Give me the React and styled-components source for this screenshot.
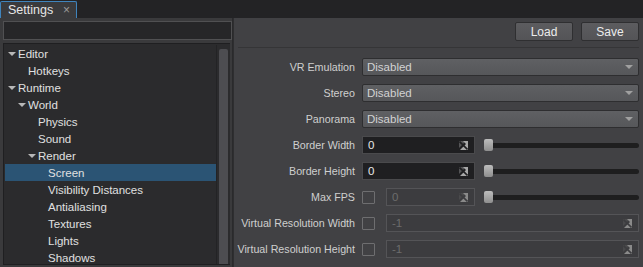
import React from 'react'
import styled, { createGlobalStyle } from 'styled-components'

const Global = createGlobalStyle`
  html, body {
    margin: 0;
    padding: 0;
    background: #232325;
  }
  body {
    font-family: 'Liberation Sans', Arial, sans-serif;
    font-size: 11px;
    color: #dcdcdc;
  }
`

const Window = styled.div`
  width: 643px;
  height: 267px;
  display: flex;
  flex-direction: column;
  overflow: hidden;
  background: #3a3a3c;
`

const TabBar = styled.div`
  height: 18px;
  display: flex;
  align-items: flex-end;
  background: #232325;
`

const Tab = styled.div`
  width: 77px;
  height: 17px;
  box-sizing: border-box;
  display: flex;
  align-items: center;
  justify-content: space-between;
  padding: 0 6px 0 7px;
  background: #3a3a3c;
  border: 1px solid #3f84bd;
  border-bottom: none;
  border-radius: 2px 2px 0 0;
  font-size: 12.5px;
  color: #e6e6e6;
`

const Close = styled.span`
  font-size: 12px;
  color: #9a9a9a;
`

const Body = styled.div`
  flex: 1;
  display: flex;
  min-height: 0;
`

const LeftPane = styled.div`
  width: 233px;
  padding: 3px 0 2px 3px;
  box-sizing: border-box;
  display: flex;
  flex-direction: column;
  gap: 3px;
  border-right: 1px solid #2a2a2c;
`

const Search = styled.div`
  height: 19px;
  box-sizing: border-box;
  background: #262628;
  border: 1px solid #505052;
`

const TreeBox = styled.div`
  flex: 1;
  display: flex;
  background: #2b2b2d;
  border: 1px solid #1f1f21;
  border-right: none;
  padding-top: 1px;
  margin-right: 2px;
  min-height: 0;
  overflow: hidden;
`

const TreeList = styled.div`
  flex: 1;
  padding: 0 0 0 1px;
`

const Node = styled.div`
  height: 17px;
  display: flex;
  align-items: center;
  padding-left: ${p => 3 + p.level * 10}px;
  background: ${p => (p.selected ? '#2b5474' : 'transparent')};
  color: #e0e0e0;
  font-size: 11.5px;
  white-space: nowrap;
`

const Arrow = styled.span`
  width: 10px;
  display: inline-flex;
  justify-content: flex-start;
  &::before {
    content: '';
    display: ${p => (p.open ? 'block' : 'none')};
    border-left: 4px solid transparent;
    border-right: 4px solid transparent;
    border-top: 4px solid #b8b8b8;
    margin-top: 1px;
  }
`

const Scroll = styled.div`
  width: 13px;
  background: #2b2b2d;
  border-left: 1px solid #232325;
  display: flex;
  justify-content: center;
  padding-top: 4px;
`

const Thumb = styled.div`
  width: 9px;
  height: 100%;
  background: #4d4d51;
  border-radius: 2px 2px 0 0;
`

const RightPane = styled.div`
  flex: 1;
  background: #414144;
  border-left: 1px solid #2e2e30;
  display: flex;
  flex-direction: column;
  padding: 4px 4px 0 4px;
`

const Toolbar = styled.div`
  display: flex;
  justify-content: flex-end;
  gap: 8px;
  padding-bottom: 6px;
  border-bottom: 1px solid #353537;
`

const Button = styled.div`
  width: 58px;
  height: 19px;
  box-sizing: border-box;
  display: flex;
  align-items: center;
  justify-content: center;
  background: linear-gradient(#5c5c5f, #545457);
  border: 1px solid #2f2f31;
  border-radius: 2px;
  color: #ececec;
  font-size: 12px;
`

const Form = styled.div`
  display: grid;
  grid-template-columns: 117px 1fr;
  column-gap: 7px;
  row-gap: 8px;
  padding-top: 10px;
`

const Label = styled.div`
  height: 18px;
  display: flex;
  align-items: center;
  justify-content: flex-end;
  color: #cfcfcf;
  white-space: nowrap;
  font-size: 10.7px;
`

const Controls = styled.div`
  flex: 1;
  display: flex;
  align-items: center;
  gap: ${p => p.gap || 9}px;
`

const Select = styled.div`
  flex: 1;
  height: 18px;
  box-sizing: border-box;
  display: flex;
  align-items: center;
  justify-content: space-between;
  padding: 0 5px 0 4px;
  background: linear-gradient(#5f6063, #56575a);
  border: 1px solid #2e2e30;
  border-radius: 2px;
  color: #d2d2d2;
  font-size: 11.5px;
  &::after {
    content: '';
    border-left: 4px solid transparent;
    border-right: 4px solid transparent;
    border-top: 4px solid #a0a0a0;
  }
`

const NumInput = styled.div`
  width: ${p => (p.wide ? 'auto' : `${p.w || 113}px`)};
  flex: ${p => (p.wide ? 1 : 'none')};
  height: 18px;
  box-sizing: border-box;
  display: flex;
  align-items: center;
  justify-content: space-between;
  padding: 0 6px 0 5px;
  background: ${p => (p.disabled ? '#3c3c3f' : '#1f1f21')};
  border: 1px solid ${p => (p.disabled ? '#545457' : '#4a4a4c')};
  color: ${p => (p.disabled ? '#6c6c6c' : '#e8e8e8')};
  font-size: 11.5px;
`

const Check = styled.div`
  width: 13px;
  height: 13px;
  box-sizing: border-box;
  border: 1px solid #6e6e70;
  border-radius: 1px;
  flex: none;
`

const Slider = styled.div`
  flex: 1;
  height: 12px;
  display: flex;
  align-items: center;
  position: relative;
`

const Groove = styled.div`
  flex: 1;
  height: 5px;
  margin-left: 2px;
  background: #1e1e1f;
  border-radius: 3px;
`

const Handle = styled.div`
  position: absolute;
  left: 0;
  top: 0;
  width: 9px;
  height: 12px;
  background: linear-gradient(#bdbdbd, #8e8e8e);
  border-radius: 2px;
`

const Spin = ({ dim }) => (
  <svg width="9" height="9" viewBox="0 0 9 9">
    <polygon points="0,0 7,0 0,7" fill={dim ? '#4a4a4c' : '#555557'} />
    <polygon points="9,1 9,9 1,9" fill={dim ? '#8a8a8a' : '#a8a8a8'} />
    <polygon points="4,0 9,0 9,5" fill={dim ? '#8a8a8a' : '#a8a8a8'} />
    <line x1="0.5" y1="0.5" x2="8.5" y2="8.5" stroke={dim ? '#3c3c3f' : '#1f1f21'} strokeWidth="1.6" />
  </svg>
)

const tree = [
  { label: 'Editor', level: 0, open: true },
  { label: 'Hotkeys', level: 1 },
  { label: 'Runtime', level: 0, open: true },
  { label: 'World', level: 1, open: true },
  { label: 'Physics', level: 2 },
  { label: 'Sound', level: 2 },
  { label: 'Render', level: 2, open: true },
  { label: 'Screen', level: 3, selected: true },
  { label: 'Visibility Distances', level: 3 },
  { label: 'Antialiasing', level: 3 },
  { label: 'Textures', level: 3 },
  { label: 'Lights', level: 3 },
  { label: 'Shadows', level: 3 },
]

const SliderCtl = () => (
  <Slider>
    <Groove />
    <Handle />
  </Slider>
)

export default function App() {
  return (
    <>
      <Global />
      <Window>
        <TabBar>
          <Tab>
            <span>Settings</span>
            <Close>×</Close>
          </Tab>
        </TabBar>
        <Body>
          <LeftPane>
            <Search />
            <TreeBox>
              <TreeList>
                {tree.map(n => (
                  <Node key={n.label} level={n.level} selected={n.selected}>
                    <Arrow open={n.open} />
                    {n.label}
                  </Node>
                ))}
              </TreeList>
              <Scroll>
                <Thumb />
              </Scroll>
            </TreeBox>
          </LeftPane>
          <RightPane>
            <Toolbar>
              <Button>Load</Button>
              <Button>Save</Button>
            </Toolbar>
            <Form>
              <Label>VR Emulation</Label>
              <Controls><Select>Disabled</Select></Controls>
              <Label>Stereo</Label>
              <Controls><Select>Disabled</Select></Controls>
              <Label>Panorama</Label>
              <Controls><Select>Disabled</Select></Controls>
              <Label>Border Width</Label>
              <Controls>
                <NumInput>0<Spin /></NumInput>
                <SliderCtl />
              </Controls>
              <Label>Border Height</Label>
              <Controls>
                <NumInput>0<Spin /></NumInput>
                <SliderCtl />
              </Controls>
              <Label>Max FPS</Label>
              <Controls gap={11}>
                <Check />
                <Controls>
                  <NumInput disabled w={89}>0<Spin dim /></NumInput>
                  <SliderCtl />
                </Controls>
              </Controls>
              <Label>Virtual Resolution Width</Label>
              <Controls gap={11}>
                <Check />
                <NumInput disabled wide>-1<Spin dim /></NumInput>
              </Controls>
              <Label>Virtual Resolution Height</Label>
              <Controls gap={11}>
                <Check />
                <NumInput disabled wide>-1<Spin dim /></NumInput>
              </Controls>
            </Form>
          </RightPane>
        </Body>
      </Window>
    </>
  )
}
